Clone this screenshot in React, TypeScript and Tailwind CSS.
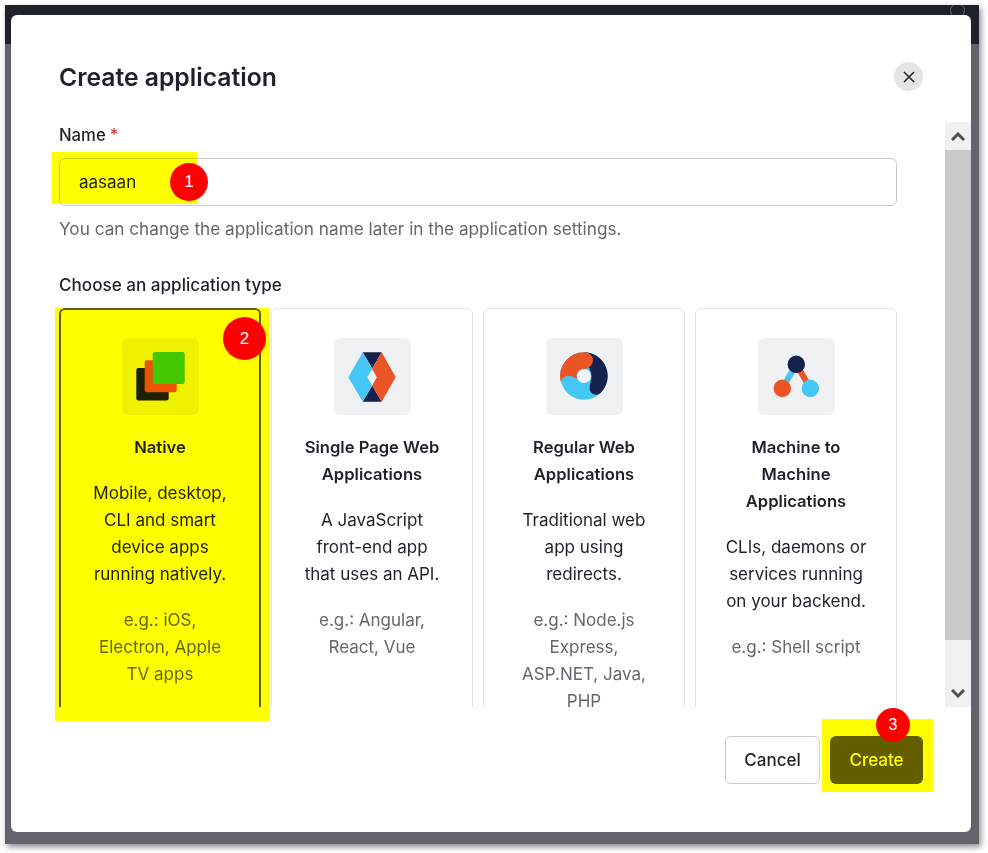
import React from "react";

const iconBox = "mx-auto flex h-[77px] w-[77px] items-center justify-center rounded-md bg-[#eff1f3]";

function NativeIcon() {
  return (
    <svg viewBox="0 0 77 77" className="h-[77px] w-[77px]">
      <rect x="14.3" y="30" width="32.4" height="32.4" rx="2" fill="#1e212a" />
      <rect x="22.7" y="22.2" width="32" height="32" rx="2" fill="#eb5424" />
      <rect x="30.7" y="14" width="32" height="32" rx="2" fill="#44c7f4" />
    </svg>
  );
}

function SpaIcon() {
  return (
    <svg viewBox="0 0 77 77" className="h-[77px] w-[77px]">
      <polygon points="28.7,14.3 47.7,14.3 38.2,30.5" fill="#16214d" />
      <polygon points="28.7,63.7 47.7,63.7 38.2,47.5" fill="#16214d" />
      <polygon points="14.3,39.3 28.7,14.3 38.2,31 33.3,39.3 38.2,47.5 28.7,63.7" fill="#44c7f4" />
      <polygon points="61.7,39.3 47.7,14.3 38.2,31 42.9,39.3 38.2,47.5 47.7,63.7" fill="#eb5424" />
    </svg>
  );
}

function WebIcon() {
  return (
    <svg viewBox="0 0 77 77" className="h-[77px] w-[77px]">
      <circle cx="38" cy="38" r="23.7" fill="#44c7f4" />
      <path d="M38 14.3A23.7 23.7 0 0 1 55 54.5C51 58.5 44 57 43.6 50.5C43.4 47 45.5 43 45.5 38C45.5 33 42 30 38 14.3Z" fill="#16214d" />
      <path d="M38.5 14.3A23.7 23.7 0 0 0 14.7 44C16 40 19 38 23 38C26 38 29 40 31.2 41A7 7 0 0 1 38 31C42 31 47 27.5 47 22C47 17 42 14.3 38.5 14.3Z" fill="#eb5424" />
      <circle cx="38" cy="38" r="7" fill="#f2f4f6" />
    </svg>
  );
}

function M2mIcon() {
  return (
    <svg viewBox="0 0 77 77" className="h-[77px] w-[77px]">
      <line x1="38.3" y1="26.3" x2="24.3" y2="50.3" stroke="#44c7f4" strokeWidth="6" />
      <line x1="38.3" y1="26.3" x2="52.3" y2="50.3" stroke="#eb5424" strokeWidth="6" />
      <circle cx="38.3" cy="26.3" r="8.7" fill="#16214d" />
      <circle cx="24.3" cy="50.3" r="8.7" fill="#eb5424" />
      <circle cx="52.3" cy="50.3" r="8.7" fill="#44c7f4" />
    </svg>
  );
}

function AppCard({
  icon,
  title,
  desc,
  eg,
  selected,
}: {
  icon: React.ReactNode;
  title: string;
  desc: string;
  eg: string;
  selected?: boolean;
}) {
  return (
    <div
      className={
        selected
          ? "h-[440px] w-[202px] shrink-0 rounded-md border-2 border-[#635dff] px-[28px] pt-[28px] text-center"
          : "h-[440px] w-[202px] shrink-0 rounded-md border border-[#e3e4e6] px-[29px] pt-[29px] text-center"
      }
    >
      <div className={iconBox}>{icon}</div>
      <div className="mt-[19px] text-[16.6px] font-semibold leading-[27px] text-[#1e212a]">{title}</div>
      <div className="mt-[19px] text-[17px] leading-[27px] text-[#1e212a]">{desc}</div>
      <div className="mt-[19px] text-[17px] leading-[27px] text-[#65676e]">{eg}</div>
    </div>
  );
}

function Badge({ n, className }: { n: number; className: string }) {
  return (
    <div
      className={`absolute z-30 flex items-center justify-center rounded-full bg-[#ff0000] font-['Liberation_Sans',sans-serif] text-white ${className}`}
    >
      {n}
    </div>
  );
}

export default function App() {
  return (
    <div className="relative h-[853px] w-[988px] overflow-hidden bg-white pl-[5px] pt-[5px] font-['Inter',sans-serif]">
      <div className="relative h-[839px] w-[974px] bg-[#616468] pl-[6px] pt-[10px] shadow-[2px_3px_6px_rgba(0,0,0,0.45)]">
        <div className="absolute left-0 right-0 top-0 h-[39px] overflow-hidden bg-[#1e212a]">
          <div className="absolute left-[945px] top-[-2px] h-[15px] w-[15px] rounded-full border border-[#666a70]" />
        </div>

        <div className="relative flex h-[817px] w-[960px] flex-col rounded-md bg-white">
          <div className="flex h-[107px] shrink-0 items-start justify-between pl-12 pr-12 pt-[47px]">
            <h1 className="text-[24.7px] font-semibold leading-[30px] text-[#1e212a]">Create application</h1>
            <button className="flex h-[29px] w-[29px] items-center justify-center rounded-full bg-[#e3e4e6]">
              <svg viewBox="0 0 12 12" className="h-3 w-3" fill="none" stroke="#1e212a" strokeWidth="1.5">
                <path d="M1 1l10 10M11 1L1 11" />
              </svg>
            </button>
          </div>

          <div className="flex h-[585px] shrink-0">
            <div className="w-[934px] overflow-hidden pl-12 pr-12">
              <label className="block h-[36px] pt-[2px] text-[16.7px] font-medium leading-[23px] text-[#1e212a]">
                Name<span className="ml-[4px] text-[#d03c38]">*</span>
              </label>
              <div className="flex h-[48px] w-[838px] items-center rounded-md border border-[#c9cace] px-[19px] pt-[2px] text-[17px] text-[#1e212a]">
                aasaan
              </div>
              <p className="mt-[9px] text-[17.2px] leading-[27px] text-[#65676e]">
                You can change the application name later in the application settings.
              </p>
              <div className="mt-[29px] h-[27px] text-[17.1px] font-medium leading-[27px] text-[#1e212a]">
                Choose an application type
              </div>
              <div className="mt-[10px] flex gap-[10px]">
                <AppCard
                  selected
                  icon={<NativeIcon />}
                  title="Native"
                  desc="Mobile, desktop, CLI and smart device apps running natively."
                  eg="e.g.: iOS, Electron, Apple TV apps"
                />
                <AppCard
                  icon={<SpaIcon />}
                  title="Single Page Web Applications"
                  desc="A JavaScript front-end app that uses an API."
                  eg="e.g.: Angular, React, Vue"
                />
                <AppCard
                  icon={<WebIcon />}
                  title="Regular Web Applications"
                  desc="Traditional web app using redirects."
                  eg="e.g.: Node.js Express, ASP.NET, Java, PHP"
                />
                <AppCard
                  icon={<M2mIcon />}
                  title="Machine to Machine Applications"
                  desc="CLIs, daemons or services running on your backend."
                  eg="e.g.: Shell script"
                />
              </div>
            </div>
            <div className="flex w-[26px] shrink-0 flex-col bg-[#f1f1f1]">
              <div className="flex h-[28px] items-center justify-center">
                <svg viewBox="0 0 14 9" className="h-[9px] w-[14px]" fill="none" stroke="#505050" strokeWidth="3">
                  <path d="M1 8l6-6 6 6" />
                </svg>
              </div>
              <div className="h-[490px] bg-[#c9c9c9]" />
              <div className="flex-1" />
              <div className="flex h-[27px] items-center justify-center">
                <svg viewBox="0 0 14 9" className="h-[9px] w-[14px]" fill="none" stroke="#505050" strokeWidth="3">
                  <path d="M1 1l6 6 6-6" />
                </svg>
              </div>
            </div>
          </div>

          <div className="flex flex-1 items-start justify-end gap-[10px] pr-12 pt-[29px]">
            <button className="h-[48px] w-[95px] rounded-md border border-[#c9cace] bg-white pt-[2px] text-[17px] font-medium text-[#1e212a]">
              Cancel
            </button>
            <button className="h-[48px] w-[93px] rounded-md bg-[#635dff] pt-[2px] text-[17px] font-medium text-white">
              Create
            </button>
          </div>
        </div>
      </div>

      <div className="absolute left-[52px] top-[152px] z-20 h-[52px] w-[145px] bg-[#ffff00] mix-blend-multiply" />
      <div className="absolute left-[55px] top-[308px] z-20 h-[413px] w-[215px] bg-[#ffff00] mix-blend-multiply" />
      <div className="absolute left-[822px] top-[719px] z-20 h-[73px] w-[111px] bg-[#ffff00] mix-blend-multiply" />

      <Badge n={1} className="left-[170px] top-[163px] h-[38px] w-[38px] text-[17px]" />
      <Badge n={2} className="left-[223px] top-[317px] h-[43px] w-[43px] text-[17px]" />
      <Badge n={3} className="left-[876px] top-[708px] h-[34px] w-[34px] text-[16px]" />
    </div>
  );
}
